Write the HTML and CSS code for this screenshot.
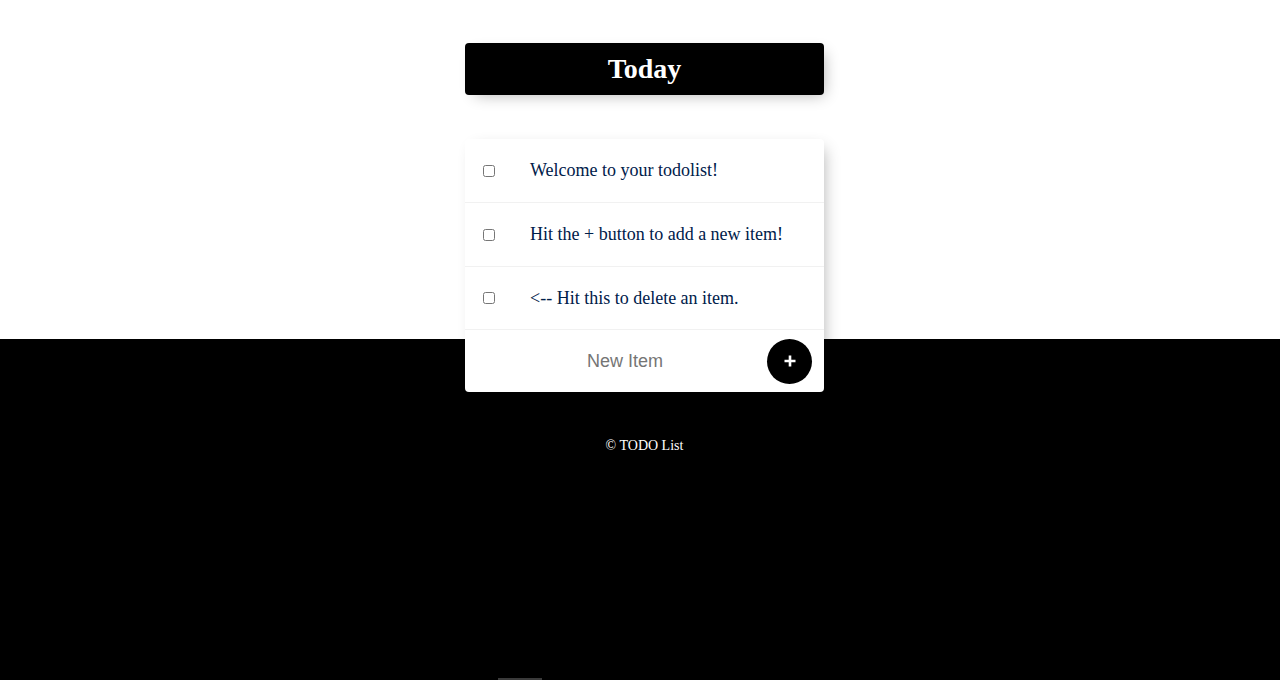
FILE: index.html
```html
<!DOCTYPE html>
<html lang="en">
<head>
<meta charset="utf-8">
<title>To-Do List</title>
<link rel="stylesheet" href="styles.css">
</head>
<body>
  <div class="box heading">
    <h1>Today</h1>
  </div>
  <div class="box list">
    <div class="item">
      <input type="checkbox" class="check">
      <p class="item-text">Welcome to your todolist!</p>
    </div>
    <div class="item">
      <input type="checkbox" class="check">
      <p class="item-text">Hit the + button to add a new item!</p>
    </div>
    <div class="item">
      <input type="checkbox" class="check">
      <p class="item-text">&lt;-- Hit this to delete an item.</p>
    </div>
    <form class="item new-item" onsubmit="return false">
      <input type="text" class="new-input" name="newItem" placeholder="New Item" autocomplete="off">
      <button type="submit" class="add-btn" aria-label="Add">
        <svg width="14" height="14" viewBox="0 0 14 14"><path d="M7 1.5v11M1.5 7h11" stroke="#fff" stroke-width="2.6" stroke-linecap="butt"/></svg>
      </button>
    </form>
  </div>
  <footer class="footer">© TODO List</footer>
  <div class="scroll-mark"></div>
</body>
</html>
```
FILE: styles.css
```css
html {
  background: #000;
}
body {
  margin: 0;
  padding: 43px 0 0 9px;
  min-height: 680px;
  box-sizing: border-box;
  background: linear-gradient(to bottom, #fff 0, #fff 339px, #000 339px, #000 100%);
  font-family: "Liberation Serif", "Times New Roman", serif;
}
.box {
  width: 359px;
  margin: 0 auto;
  border-radius: 4px;
  box-shadow: 5px 5px 15px -5px rgba(0, 0, 0, 0.3);
}
.heading {
  height: 52px;
  background: #000;
  display: flex;
  align-items: center;
  justify-content: center;
}
.heading h1 {
  margin: 0;
  color: #fff;
  font-size: 28px;
  font-weight: bold;
  line-height: 1;
}
.list {
  margin-top: 44px;
  background: #fff;
}
.item {
  height: 64px;
  display: flex;
  align-items: center;
  border-bottom: 1px solid #f1f1f1;
  box-sizing: border-box;
}
.item:nth-child(3) {
  height: 63px;
}
.item:last-child {
  height: 62px;
  border-bottom: 0;
}
.check {
  margin: 0 0 0 18px;
  width: 12px;
  height: 12px;
}
.item-text {
  margin: 0 0 0 35px;
  font-size: 18px;
  color: #00204a;
}
.new-item {
  margin: 0;
}
.new-input {
  margin-left: 20px;
  width: 280px;
  height: 60px;
  border: none;
  padding: 0;
  outline: none;
  text-align: center;
  font-family: "Liberation Sans", Arial, sans-serif;
  font-size: 18px;
  background: transparent;
}
.new-input::placeholder {
  color: #757575;
}
.add-btn {
  margin-left: 2px;
  width: 45px;
  height: 45px;
  border-radius: 50%;
  border: 0;
  padding: 0;
  background: #000;
  display: flex;
  align-items: center;
  justify-content: center;
}
.footer {
  margin-top: 46px;
  text-align: center;
  color: #fff;
  font-size: 14px;
  line-height: 16px;
}
.scroll-mark {
  position: absolute;
  left: 498px;
  top: 678px;
  width: 44px;
  height: 2px;
  background: #3a3a3a;
}
```
